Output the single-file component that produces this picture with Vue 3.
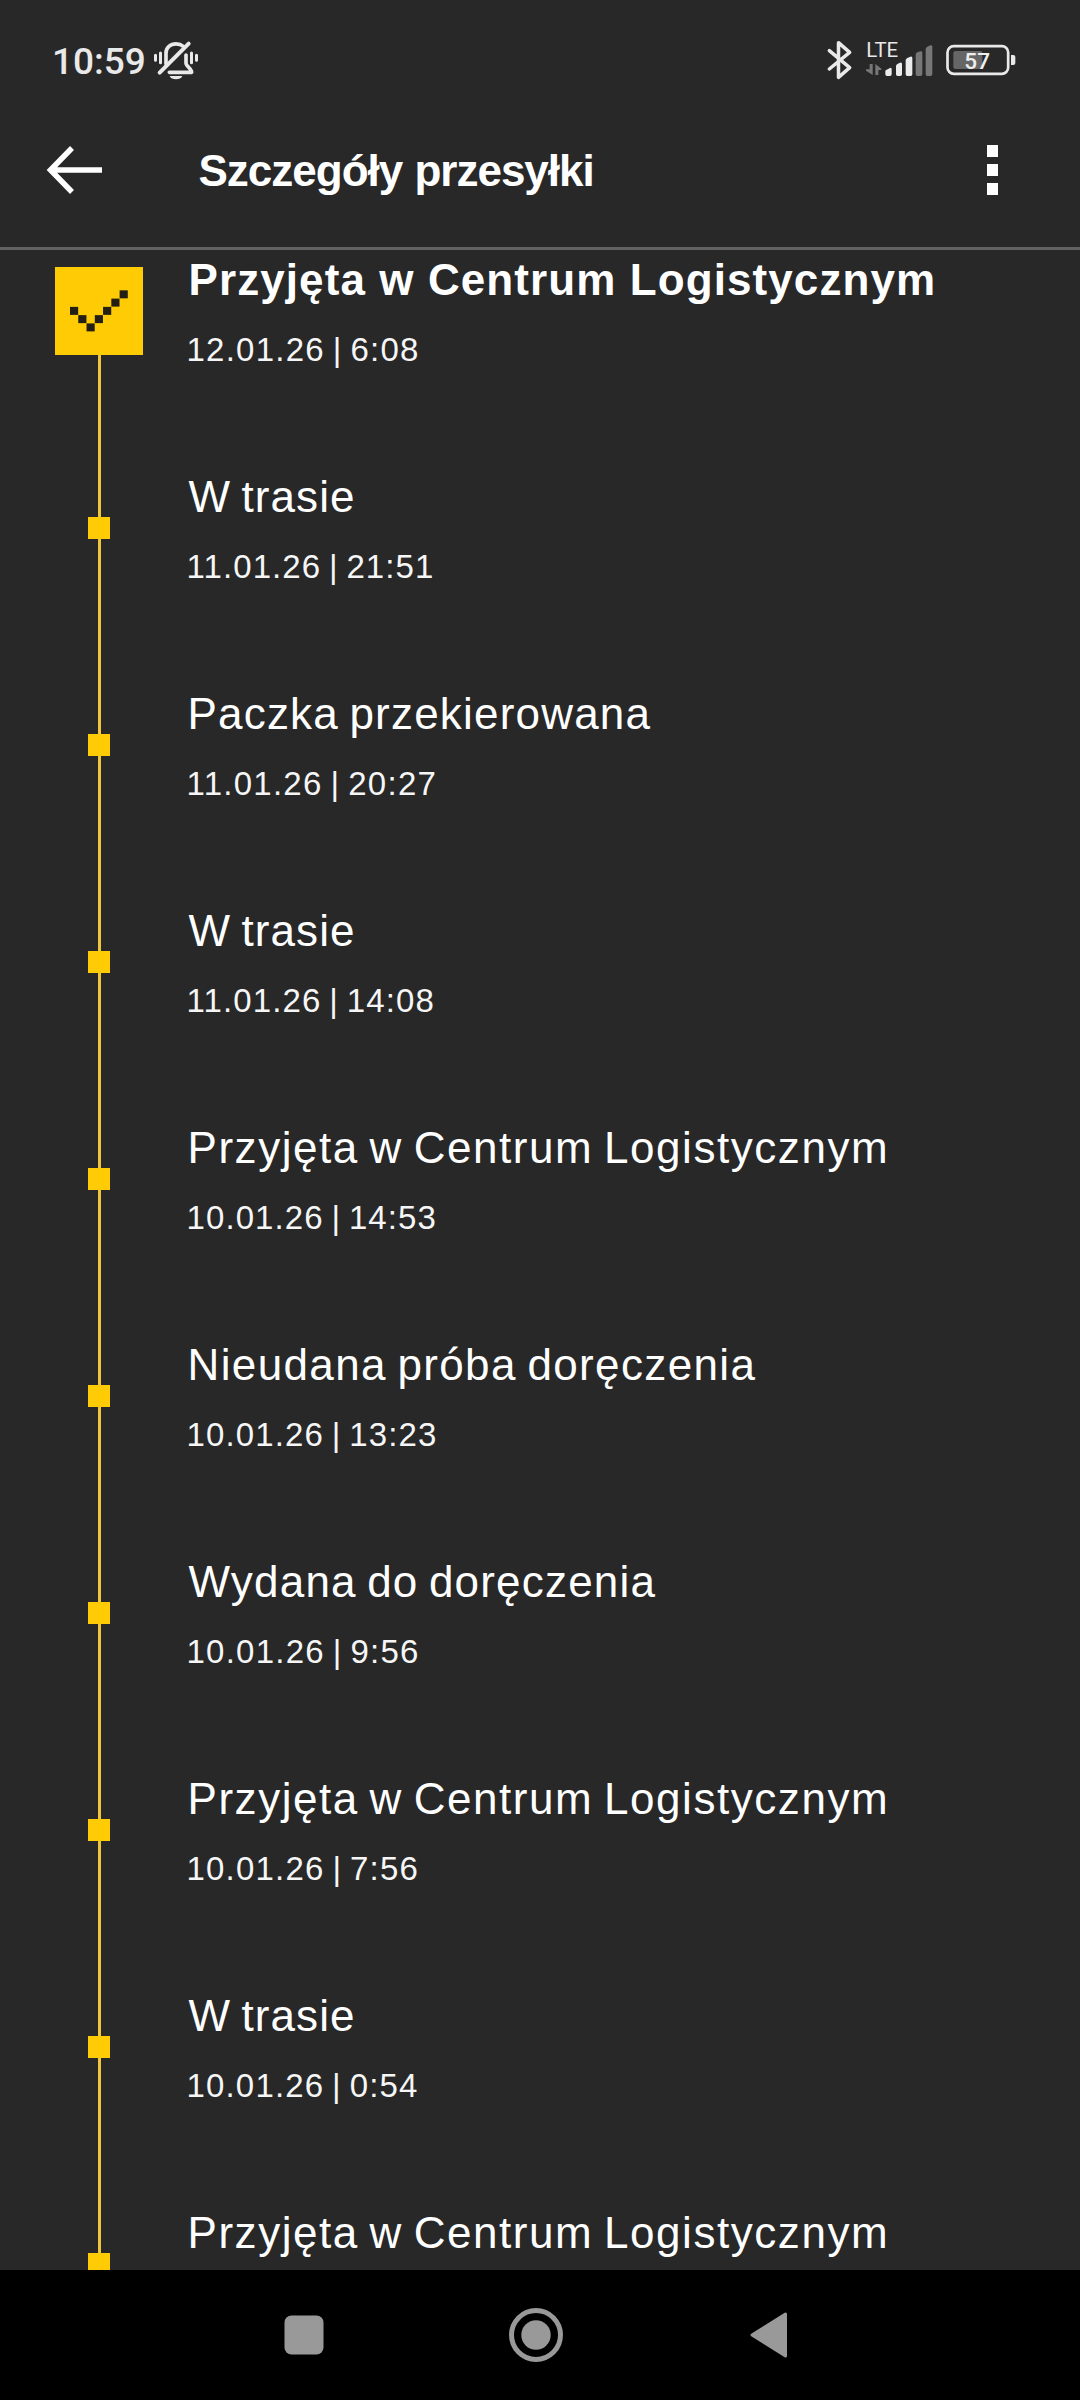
<script setup>
const FAMILY = '"Liberation Sans", Arial, sans-serif'
const ctx = document.createElement('canvas').getContext('2d')

// Tracks a label so that its ink starts at `left` and ends at `right` within the given column origin.
function track(text, size, weight, origin, left, right, word = 0) {
  ctx.font = `${weight} ${size}px ${FAMILY}`
  const m = ctx.measureText(text)
  const gaps = (text.split(' ').length - 1) * word
  const ink = m.actualBoundingBoxLeft + m.actualBoundingBoxRight + gaps
  return {
    letterSpacing: `${((right - left - ink) / (text.length - 1)).toFixed(3)}px`,
    wordSpacing: `${word}px`,
    marginLeft: `${(left - origin + m.actualBoundingBoxLeft).toFixed(2)}px`,
  }
}

const COLUMN = 187
const centrum = 'Przyjęta w Centrum Logistycznym'
const events = [
  { title: centrum, date: '12.01.26 | 6:08', span: [190.5, 933], dateEnd: 417, current: true },
  { title: 'W trasie', date: '11.01.26 | 21:51', span: [188.5, 353], dateEnd: 432 },
  { title: 'Paczka przekierowana', date: '11.01.26 | 20:27', span: [190.5, 650.5], dateEnd: 434.5 },
  { title: 'W trasie', date: '11.01.26 | 14:08', span: [188.5, 353], dateEnd: 432.5 },
  { title: centrum, date: '10.01.26 | 14:53', span: [190.5, 885], dateEnd: 434.5 },
  { title: 'Nieudana próba doręczenia', date: '10.01.26 | 13:23', span: [190.5, 755.5], dateEnd: 435 },
  { title: 'Wydana do doręczenia', date: '10.01.26 | 9:56', span: [188.5, 655.5], dateEnd: 417 },
  { title: centrum, date: '10.01.26 | 7:56', span: [190.5, 885], dateEnd: 416.5 },
  { title: 'W trasie', date: '10.01.26 | 0:54', span: [188.5, 353], dateEnd: 417 },
  { title: centrum, date: '', span: [190.5, 885], dateEnd: 416 },
].map((e) => ({
  ...e,
  titleStyle: track(e.title, 44, e.current ? 700 : 400, COLUMN, ...e.span, e.current ? 0 : -3),
  dateStyle: e.date ? track(e.date, 33, 400, COLUMN, 188.5, e.dateEnd, -2.5) : null,
}))

const headingStyle = track('Szczegóły przesyłki', 44, 700, 197, 199.5, 592.5, 1)
const checkCells = [[0, 2], [1, 3], [2, 4], [3, 3], [4, 2], [5, 1], [6, 0]]
</script>

<template>
  <div class="screen">
    <header class="top">
      <div class="status">
        <div class="status-left">
          <span class="clock">10:59</span>
          <svg class="bell" width="48" height="40" viewBox="456 60 144 120" fill="none" stroke="#e9e9e9" stroke-linecap="round">
            <path d="M498 131V99C498 82 511 71.500 528 71.500C537 71.500 544 74 550 79M558 105V130C558 138 575 147 575 157H508" stroke-width="11" stroke-linejoin="round" />
            <path d="M479 158L566 71" stroke-width="12" />
            <path d="M466.500 106V121M481.500 99V128M574.500 99V128M589.500 106V121" stroke-width="9" />
            <path d="M509 168H547C543 181 513 181 509 168Z" fill="#e9e9e9" stroke="none" />
          </svg>
        </div>
        <div class="status-right">
          <svg width="27" height="40" viewBox="138 60 81 120" fill="none" stroke="#e9e9e9" stroke-width="10.500" stroke-linecap="round" stroke-linejoin="round">
            <path d="M148 92L209 143L175.500 172V68L209 97L148 147" />
          </svg>
          <svg class="signal" width="69" height="40" viewBox="254 60 207 120">
            <text x="257.500" y="110" font-size="59" textLength="96" lengthAdjust="spacingAndGlyphs" fill="#e9e9e9">LTE</text>
            <g fill="#777">
              <path d="M268 132H277V165L257 152V148H268ZM285 132L303 146V150H294V165H285Z" />
              <path d="M406 168V104Q406 99 411 97L420 94Q426 92 426 98V162Q426 168 420 168H411Q406 168 406 163Z" />
              <path d="M436 163V87Q436 82 441 80L450 76Q456 74 456 80V162Q456 168 450 168H441Q436 168 436 163Z" />
            </g>
            <g fill="#ececec">
              <path d="M315 163V154Q315 150 319 149L329 144Q334 142 334 148V163Q334 168 329 168H320Q315 168 315 163Z" />
              <path d="M347 163V139Q347 134 351 132L359 128Q365 126 365 132V163Q365 168 360 168H352Q347 168 347 163Z" />
              <path d="M376 163V121Q376 116 381 114L390 110Q396 108 396 114V163Q396 168 391 168H381Q376 168 376 163Z" />
            </g>
          </svg>
          <svg class="battery" width="70" height="40" viewBox="497 60 210 120">
            <rect x="501.500" y="78.500" width="182" height="83" rx="19" fill="none" stroke="#e9e9e9" stroke-width="8" />
            <path d="M692 105H699Q705 105 705 111V129Q705 135 699 135H692Z" fill="#e9e9e9" />
            <rect x="519" y="93" width="87" height="54" rx="6" fill="#666" />
            <text x="552" y="146" font-size="67" font-weight="500" textLength="77" lengthAdjust="spacingAndGlyphs" fill="#eee">57</text>
          </svg>
        </div>
      </div>
      <div class="bar">
        <svg class="back" width="58" height="50" viewBox="0 0 58 50" fill="none" stroke="#fff" stroke-width="5.500">
          <path d="M56 25H5M26 3L4.500 25L26 47" />
        </svg>
        <h1 :style="headingStyle">Szczegóły przesyłki</h1>
        <div class="more"><i /><i /><i /></div>
      </div>
    </header>

    <main class="timeline">
      <div v-for="(e, i) in events" :key="i" class="event" :class="{ current: e.current }">
        <div class="rail">
          <span class="segment lead" />
          <svg v-if="e.current" class="node" width="88" height="88" viewBox="0 0 264 264">
            <rect v-for="([x, y]) in checkCells" :key="x" :x="45 + x * 24.8" :y="70 + y * 24.8" width="24.500" height="24" fill="#231f14" />
          </svg>
          <span v-else class="node" />
          <span class="segment tail" />
        </div>
        <div class="info">
          <div class="title" :style="e.titleStyle">{{ e.title }}</div>
          <div v-if="e.date" class="date" :style="e.dateStyle">{{ e.date }}</div>
        </div>
      </div>
    </main>

    <nav class="system-nav">
      <svg width="40" height="40" viewBox="0 0 40 40"><rect x="0.500" y="0.500" width="39" height="39" rx="7" fill="#999" /></svg>
      <svg width="54" height="54" viewBox="0 0 54 54">
        <circle cx="27" cy="27" r="24.500" fill="none" stroke="#999" stroke-width="5" />
        <circle cx="27" cy="27" r="14.700" fill="#999" />
      </svg>
      <svg width="38" height="46" viewBox="0 0 38 46"><path d="M2 23L35.500 2V44Z" fill="#999" stroke="#999" stroke-width="3" stroke-linejoin="round" /></svg>
    </nav>
  </div>
</template>

<style>
body {
  margin: 0;
  background: #282828;
}
</style>

<style scoped>
.screen {
  display: flex;
  flex-direction: column;
  width: 1080px;
  height: 2400px;
  overflow: hidden;
  background: #282828;
  color: #fff;
  font-family: "Liberation Sans", Arial, sans-serif;
}
svg {
  display: block;
  flex: none;
}
svg text {
  font-family: Roboto, sans-serif;
}
.top {
  flex: none;
  box-sizing: border-box;
  height: 250px;
  border-bottom: 3px solid #616161;
}
.status {
  display: flex;
  justify-content: space-between;
  box-sizing: border-box;
  height: 100px;
  padding: 40px 64px 0 52px;
}
.status-left,
.status-right {
  display: flex;
  height: 40px;
}
.clock {
  width: 100px;
  color: #e9e9e9;
  font: 500 37px/43px Roboto, sans-serif;
  white-space: nowrap;
}
.signal {
  margin-left: 12px;
}
.battery {
  margin-left: 12px;
}
.bar {
  display: flex;
  align-items: center;
  height: 140px;
  padding: 0 82px 0 46px;
}
.back {
  margin-right: 93px;
}
h1 {
  flex: none;
  margin: 0;
  padding-top: 1px;
  font-size: 44px;
  line-height: 50px;
  font-weight: 700;
  white-space: nowrap;
}
.more {
  display: flex;
  flex-direction: column;
  gap: 7.500px;
  margin-left: auto;
}
.more i {
  width: 11.500px;
  height: 11.500px;
  background: #fff;
}
.timeline {
  flex: none;
  height: 2020px;
  overflow: hidden;
}
.event {
  display: flex;
  height: 217px;
  padding-left: 55px;
}
.rail {
  display: flex;
  flex-direction: column;
  width: 132px;
}
.segment {
  width: 3px;
  margin-left: 43px;
  background: #f1c63b;
}
.lead {
  height: 50px;
}
.tail {
  flex: 1;
}
.node {
  width: 22px;
  height: 22px;
  margin-left: 33px;
  background: #ffcb05;
}
.current .lead {
  height: 17px;
  background: none;
}
.current .node {
  width: 88px;
  height: 88px;
  margin-left: 0;
}
.info {
  padding-top: 5px;
  white-space: nowrap;
}
.title {
  font-size: 44px;
  line-height: 50px;
}
.current .title {
  font-weight: 700;
}
.date {
  margin-top: 25px;
  color: #f6f6f6;
  font-size: 33px;
  line-height: 40px;
}
.system-nav {
  display: flex;
  align-items: center;
  flex: 1;
  padding-left: 283.500px;
  background: #000;
}
.system-nav svg:nth-child(2) {
  margin: 0 187px 0 185.500px;
}
</style>
